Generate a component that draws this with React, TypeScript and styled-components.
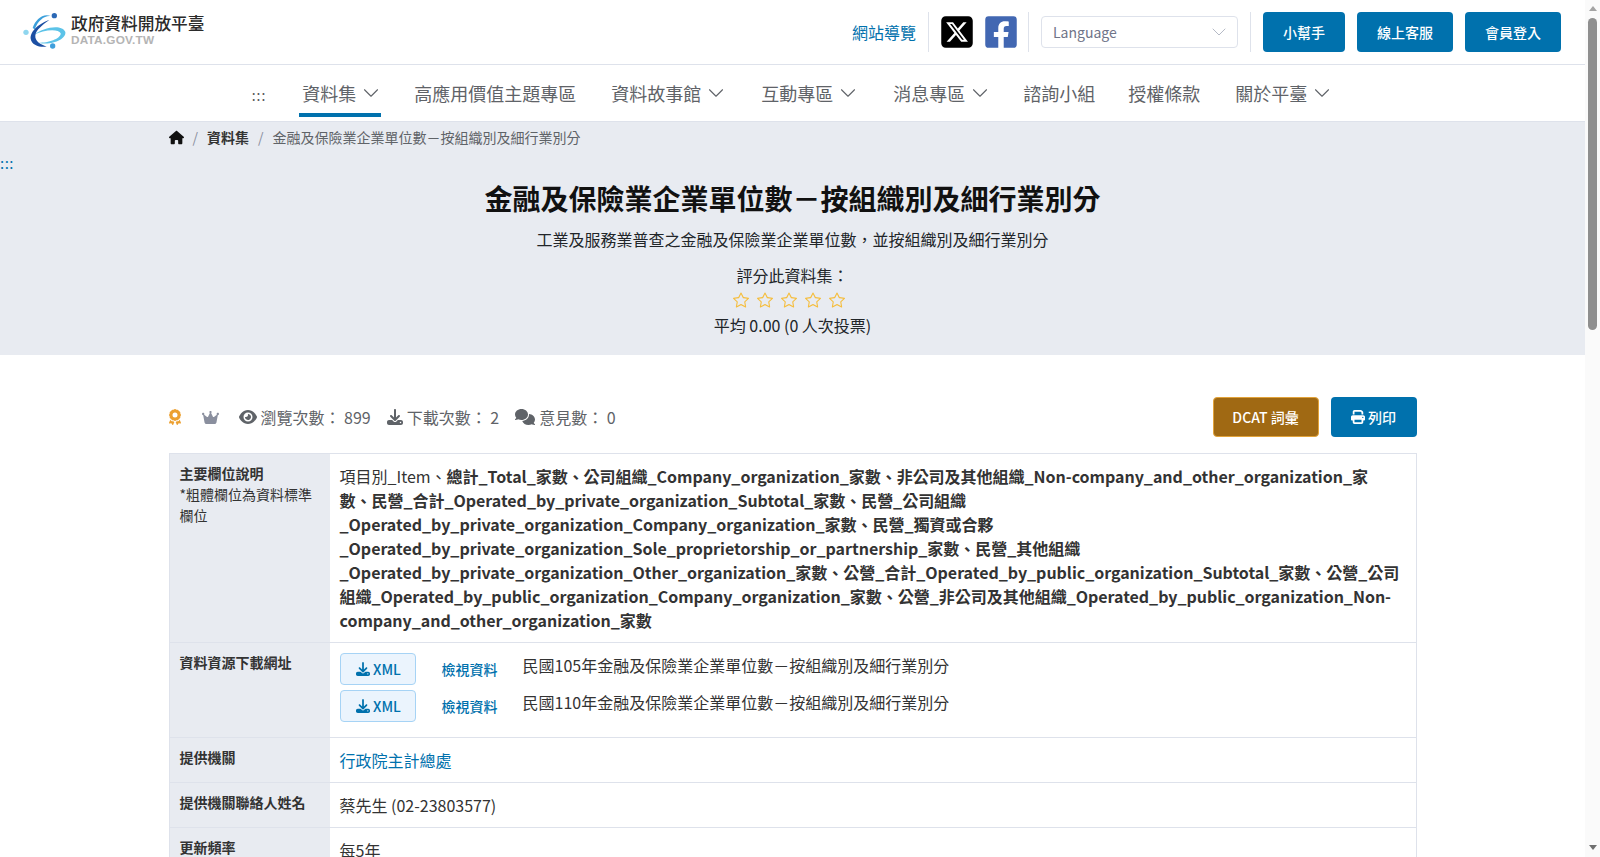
import React from 'react';
import styled, { createGlobalStyle } from 'styled-components';
import { FaHouse, FaEye, FaDownload, FaComments, FaPrint, FaCrown, FaAward, FaSquareXTwitter } from 'react-icons/fa6';
import { FaFacebookSquare } from 'react-icons/fa';
import { FiChevronDown } from 'react-icons/fi';
import { BsStar } from 'react-icons/bs';

const GlobalStyle = createGlobalStyle`
  html, body {
    margin: 0;
    padding: 0;
    height: 100%;
    overflow: hidden;
    background: #fff;
  }
  body, button, select {
    font-family: "Noto Sans CJK TC", "Noto Sans", sans-serif;
  }
  * { box-sizing: border-box; }
`;

const navItems = [
  { label: '資料集', caret: true, active: true },
  { label: '高應用價值主題專區' },
  { label: '資料故事館', caret: true },
  { label: '互動專區', caret: true },
  { label: '消息專區', caret: true },
  { label: '諮詢小組' },
  { label: '授權條款' },
  { label: '關於平臺', caret: true },
];

const Logo = () => (
  <svg width="50" height="44" viewBox="0 0 150 132" fill="none">
    <path d="M40 76C70 50 128 42 136 66c4 22-44 42-80 32 32 2 68-14 66-28-6-14-50-12-82 6z" fill="#5cc3e8" />
    <path d="M38 54C46 28 70 8 92 18 72 16 54 32 44 58z" fill="#3a9fdb" />
    <path d="M88 30C62 38 30 62 32 86c2 18 26 27 48 24-18-6-36-16-34-34 2-16 22-32 42-46z" fill="#1c4fa3" />
    <circle cx="103" cy="17" r="8" fill="#2b68b5" />
    <circle cx="18" cy="67" r="8" fill="#8fd6ef" />
    <circle cx="98" cy="108" r="8" fill="#3f9fdc" />
  </svg>
);

const App = () => (
  <>
    <GlobalStyle />
    <Viewport>
      <Page>
        <TopBar>
          <Brand>
            <Logo />
            <BrandText>
              <BrandName>政府資料開放平臺</BrandName>
              <BrandSub>DATA.GOV.TW</BrandSub>
            </BrandText>
          </Brand>
          <TopActions>
            <SiteMap>網站導覽</SiteMap>
            <Divider />
            <Social>
              <FaSquareXTwitter size={36} color="#000" />
              <FaFacebookSquare size={36} color="#4267b2" />
            </Social>
            <Divider />
            <LanguageBox>
              Language
              <LanguageCaret>
                <FiChevronDown size={24} strokeWidth={1} color="#b5bac6" />
              </LanguageCaret>
            </LanguageBox>
            <Divider />
            <TopButton $width={82}>小幫手</TopButton>
            <TopButton $width={96}>線上客服</TopButton>
            <TopButton $width={96}>會員登入</TopButton>
          </TopActions>
        </TopBar>

        <Nav>
          <NavDots>:::</NavDots>
          {navItems.map((item) => (
            <NavItem key={item.label} $active={item.active} $caret={item.caret}>
              {item.label}
              {item.caret && <FiChevronDown size={26} strokeWidth={1} />}
            </NavItem>
          ))}
        </Nav>

        <Hero>
          <Crumbs>
            <FaHouse size={15} color="#111" />
            <CrumbSep>/</CrumbSep>
            <CrumbStrong>資料集</CrumbStrong>
            <CrumbSep>/</CrumbSep>
            <span>金融及保險業企業單位數－按組織別及細行業別分</span>
          </Crumbs>
          <HeroDots>:::</HeroDots>
          <HeroTitle>金融及保險業企業單位數－按組織別及細行業別分</HeroTitle>
          <HeroDesc>工業及服務業普查之金融及保險業企業單位數，並按組織別及細行業別分</HeroDesc>
          <RateLabel>評分此資料集：</RateLabel>
          <Stars>
            {[0, 1, 2, 3, 4].map((i) => (
              <BsStar key={i} size={16} color="#f5bd3c" />
            ))}
          </Stars>
          <RateAverage>平均 0.00 (0 人次投票)</RateAverage>
        </Hero>

        <Content>
          <StatsRow>
            <Stats>
              <AwardWrap>
                <FaAward size={16} color="#eca030" />
              </AwardWrap>
              <CrownWrap>
                <FaCrown size={17} color="#8a8f9e" />
              </CrownWrap>
              <Stat><FaEye size={18} />瀏覽次數： 899</Stat>
              <Stat><FaDownload size={16} />下載次數： 2</Stat>
              <Stat><FaComments size={20} />意見數： 0</Stat>
            </Stats>
            <StatButtons>
              <DcatButton>DCAT 詞彙</DcatButton>
              <PrintButton><FaPrint size={14} />列印</PrintButton>
            </StatButtons>
          </StatsRow>

          <InfoTable>
            <Row>
              <Label>
                主要欄位說明
                <LabelNote>*粗體欄位為資料標準欄位</LabelNote>
              </Label>
              <Value>
                項目別_Item、<StandardFields>總計_Total_家數、公司組織_Company_organization_家數、非公司及其他組織_Non-company_and_other_organization_家<br />數、民營_合計_Operated_by_private_organization_Subtotal_家數、民營_公司組織_Operated_by_private_organization_Company_organization_家數、民營_獨資或合夥_Operated_by_private_organization_Sole_proprietorship_or_partnership_家數、民營_其他組織_Operated_by_private_organization_Other_organization_家數、公營_合計_Operated_by_public_organization_Subtotal_家數、公營_公司組織_Operated_by_public_organization_Company_organization_家數、公營_非公司及其他組織_Operated_by_public_organization_Non-company_and_other_organization_家數</StandardFields>
              </Value>
            </Row>
            <Row>
              <Label>資料資源下載網址</Label>
              <Value>
                <ResourceList>
                  {['民國105年金融及保險業企業單位數－按組織別及細行業別分', '民國110年金融及保險業企業單位數－按組織別及細行業別分'].map((name) => (
                    <Resource key={name}>
                      <XmlButton><FaDownload size={14} />XML</XmlButton>
                      <ViewLink>檢視資料</ViewLink>
                      <span>{name}</span>
                    </Resource>
                  ))}
                </ResourceList>
              </Value>
            </Row>
            <Row>
              <Label>提供機關</Label>
              <Value><AgencyLink>行政院主計總處</AgencyLink></Value>
            </Row>
            <Row>
              <Label>提供機關聯絡人姓名</Label>
              <Value>蔡先生 (02-23803577)</Value>
            </Row>
            <Row>
              <Label>更新頻率</Label>
              <Value>每5年</Value>
            </Row>
          </InfoTable>
        </Content>
      </Page>
      <Scrollbar>
        <ScrollArrow $up />
        <ScrollThumb />
        <ScrollArrow />
      </Scrollbar>
    </Viewport>
  </>
);

const Viewport = styled.div`
  display: flex;
  height: 857px;
  overflow: hidden;
`;

const Page = styled.div`
  flex: 1;
  min-width: 0;
  color: #212529;
`;

const TopBar = styled.header`
  display: flex;
  align-items: center;
  justify-content: space-between;
  height: 65px;
  padding: 0 24px 0 20px;
  border-bottom: 1px solid #dee2eb;
`;

const Brand = styled.div`
  display: flex;
  align-items: center;
  gap: 1px;
`;

const BrandText = styled.div`
  display: flex;
  flex-direction: column;
  margin-top: -4px;
`;

const BrandName = styled.div`
  font-size: 16.7px;
  line-height: 20px;
  font-weight: 500;
  color: #2b2b2b;
`;

const BrandSub = styled.div`
  font-family: "Liberation Sans", sans-serif;
  font-size: 11.8px;
  line-height: 14px;
  font-weight: 700;
  letter-spacing: 0.2px;
  color: #b4b4b4;
`;

const TopActions = styled.div`
  display: flex;
  align-items: center;
  gap: 12px;
`;

const SiteMap = styled.a`
  font-size: 16px;
  color: #0071ad;
`;

const Divider = styled.span`
  width: 1px;
  height: 40px;
  background: #dee2eb;
`;

const Social = styled.div`
  display: flex;
  align-items: center;
  gap: 8px;
  margin: 0 -3px 0 -2px;
`;

const LanguageBox = styled.div`
  display: flex;
  align-items: center;
  justify-content: space-between;
  width: 197px;
  height: 32px;
  padding: 0 12px 0 11px;
  border: 1px solid #dee2eb;
  border-radius: 4px;
  font-size: 14px;
  color: #6f7488;
`;

const LanguageCaret = styled.span`
  display: inline-flex;
  margin-right: -6px;
`;

const TopButton = styled.button<{ $width: number }>`
  width: ${(p) => p.$width}px;
  height: 40px;
  border: 0;
  border-radius: 4px;
  background: #0071ad;
  color: #fff;
  font-size: 14px;
  font-weight: 500;
`;

const Nav = styled.nav`
  display: flex;
  justify-content: center;
  align-items: flex-start;
  gap: 27px;
  height: 57px;
  padding-left: 2px;
  border-bottom: 1px solid #dee2eb;
`;

const NavDots = styled.span`
  align-self: center;
  margin: 4px 4px 0 0;
  font-size: 14px;
  letter-spacing: 1px;
  color: #555;
`;

const NavItem = styled.a<{ $active?: boolean; $caret?: boolean }>`
  display: flex;
  align-items: center;
  gap: 2px;
  height: 52px;
  padding: 8px ${(p) => (p.$caret ? 0 : 3)}px 0 3px;
  margin: 0 ${(p) => (p.$caret ? 3 : 0)}px 0 ${(p) => (p.$caret ? 2 : 0)}px;
  font-size: 18px;
  color: #5f6368;
  border-bottom: 4px solid ${(p) => (p.$active ? '#0071ad' : 'transparent')};

  svg {
    margin-right: -3px;
  }
`;

const Hero = styled.section`
  position: relative;
  height: 233px;
  padding-top: 4px;
  background: #e8ebf1;
  text-align: center;
`;

const Crumbs = styled.div`
  display: flex;
  align-items: center;
  gap: 9px;
  width: 1248px;
  margin: 0 auto;
  height: 22px;
  font-size: 14px;
  color: #5f6368;
`;

const CrumbSep = styled.span`
  color: #8a8f9e;
`;

const CrumbStrong = styled.span`
  font-weight: 700;
  color: #333;
`;

const HeroDots = styled.span`
  position: absolute;
  left: 0;
  top: 30px;
  font-size: 15px;
  letter-spacing: 0.5px;
  color: #0071ad;
`;

const HeroTitle = styled.h1`
  margin: 29px 0 0;
  font-size: 28px;
  line-height: 42px;
  font-weight: 700;
  color: #111;
`;

const HeroDesc = styled.p`
  margin: 8px 0 0;
  font-size: 16px;
  line-height: 24px;
  color: #212529;
`;

const RateLabel = styled.div`
  margin-top: 12px;
  font-size: 16px;
  line-height: 24px;
`;

const Stars = styled.div`
  display: flex;
  justify-content: center;
  align-items: center;
  gap: 8px;
  height: 24px;
  margin-top: 1px;
  padding-right: 8px;
`;

const RateAverage = styled.div`
  font-size: 16px;
  line-height: 26px;
`;

const Content = styled.main`
  width: 1248px;
  margin: 0 auto;
`;

const StatsRow = styled.div`
  display: flex;
  align-items: center;
  justify-content: space-between;
  margin-top: 42px;
  height: 40px;
`;

const Stats = styled.div`
  display: flex;
  align-items: center;
  gap: 16px;
  font-size: 16px;
  color: #5f6368;
`;

const AwardWrap = styled.span`
  display: inline-flex;
  margin-left: -2px;
`;

const CrownWrap = styled.span`
  display: inline-flex;
  margin: 0 4px 0 3px;
`;

const Stat = styled.span`
  display: inline-flex;
  align-items: center;
  gap: 4px;
`;

const StatButtons = styled.div`
  display: flex;
  gap: 12px;
`;

const DcatButton = styled.button`
  width: 106px;
  height: 40px;
  border: 1px solid #e2a33a;
  border-radius: 4px;
  background: #a06913;
  color: #fff;
  font-size: 14px;
  font-weight: 500;
`;

const PrintButton = styled.button`
  display: inline-flex;
  align-items: center;
  justify-content: center;
  gap: 3px;
  width: 86px;
  height: 40px;
  border: 0;
  border-radius: 4px;
  background: #0071ad;
  color: #fff;
  font-size: 14px;
  font-weight: 500;
`;

const InfoTable = styled.div`
  margin-top: 16px;
  border: 1px solid #dee2eb;
  border-bottom: 0;
`;

const Row = styled.div`
  display: grid;
  grid-template-columns: 160px 1fr;
  border-bottom: 1px solid #dee2eb;
`;

const Label = styled.div`
  padding: 9px 10px 12px;
  background: #e8ebf1;
  font-size: 14px;
  line-height: 21px;
  font-weight: 700;
  color: #333;
`;

const LabelNote = styled.div`
  font-weight: 400;
`;

const Value = styled.div`
  padding: 10px;
  font-size: 16px;
  line-height: 24px;
  color: #333;
  word-break: break-word;
`;

const StandardFields = styled.b`
  letter-spacing: -0.02px;
`;

const ResourceList = styled.div`
  display: flex;
  flex-direction: column;
  gap: 5px;
  padding-bottom: 5px;
`;

const Resource = styled.div`
  display: flex;
  align-items: flex-start;
`;

const XmlButton = styled.button`
  display: inline-flex;
  align-items: center;
  justify-content: center;
  gap: 3px;
  width: 76px;
  height: 32px;
  margin-right: 26px;
  padding: 0 0 0 2px;
  border: 1px solid #a6d3f5;
  border-radius: 4px;
  background: #ebf4fd;
  color: #0071ad;
  font-size: 14px;
  font-weight: 500;
`;

const ViewLink = styled.a`
  margin: 4px 25px 0 0;
  font-size: 14px;
  font-weight: 500;
  color: #0071ad;
`;

const AgencyLink = styled.a`
  color: #0071ad;
`;

const Scrollbar = styled.div`
  display: flex;
  flex-direction: column;
  align-items: center;
  flex-shrink: 0;
  width: 15px;
  background: #fafafa;
`;

const ScrollArrow = styled.span<{ $up?: boolean }>`
  width: 0;
  height: 0;
  margin: ${(p) => (p.$up ? '6px 0 7px' : 'auto 0 7px')};
  border-left: 4.5px solid transparent;
  border-right: 4.5px solid transparent;
  ${(p) => (p.$up ? 'border-bottom: 5px solid #a3a3a3;' : 'border-top: 5px solid #6f6f6f;')}
`;

const ScrollThumb = styled.span`
  width: 9px;
  height: 312px;
  border-radius: 5px;
  background: #8f8f8f;
`;

export default App;
